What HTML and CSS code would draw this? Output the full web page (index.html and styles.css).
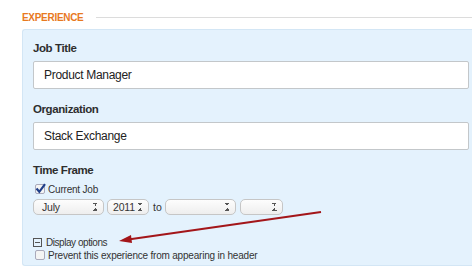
FILE: index.html
```html
<!DOCTYPE html>
<html lang="en">
<head>
    <meta charset="UTF-8">
    <title>Experience</title>
    <link rel="stylesheet" href="styles.css">
</head>
<body>
    <div class="section-head">
        <span class="section-title">EXPERIENCE</span>
        <span class="section-rule"></span>
    </div>

    <div class="panel">
        <label class="field-label">Job Title</label>
        <div class="text-input">Product Manager</div>

        <label class="field-label">Organization</label>
        <div class="text-input">Stack Exchange</div>

        <label class="field-label">Time Frame</label>
        <div class="check-row">
            <span class="checkbox checked">
                <svg width="11" height="11" viewBox="0 0 11 11"><path d="M1.5 5.5 L4.3 8.8 L10 1.2" fill="none" stroke="#1f3f8a" stroke-width="2.2"/></svg>
            </span>
            <span>Current Job</span>
        </div>
        <div class="date-row">
            <span class="select month">July</span>
            <span class="select year">2011</span>
            <span class="to">to</span>
            <span class="select month"></span>
            <span class="select year-empty"></span>
        </div>

        <div class="options-row">
            <span class="toggle-box"></span>
            <span>Display options</span>
        </div>
        <div class="check-row prevent">
            <span class="checkbox"></span>
            <span>Prevent this experience from appearing in header</span>
        </div>
    </div>

    <svg class="arrow" width="474" height="271" viewBox="0 0 474 271">
        <line x1="321" y1="212" x2="130" y2="239.3" stroke="#a3161a" stroke-width="2"/>
        <path d="M119 241 L131 235 L132 243 Z" fill="#a3161a"/>
    </svg>
</body>
</html>
```

FILE: styles.css
```css
body {
    margin: 0;
    padding: 10px 2px 0 22px;
    background: #fff;
    font-family: "Liberation Sans", Arial, sans-serif;
    color: #333;
    position: relative;
    height: 261px;
    overflow: hidden;
}

.section-head {
    display: flex;
    align-items: center;
    height: 15px;
}

.section-title {
    color: #e8791f;
    font-size: 10px;
    font-weight: bold;
    letter-spacing: -0.3px;
}

.section-rule {
    flex: 1;
    height: 1px;
    margin-left: 13px;
    background: #dcdcdc;
}

.panel {
    margin-top: 4px;
    background: #e4f2fd;
    border: 1px solid #d3e6f5;
    border-right: none;
    border-radius: 3px 0 0 3px;
    padding: 11px 4px 10px 10px;
    height: 214px;
}

.field-label {
    display: block;
    font-size: 11.5px;
    font-weight: bold;
    line-height: 14px;
    letter-spacing: -0.4px;
    color: #2e2e2e;
}

.text-input {
    box-sizing: border-box;
    width: 436px;
    height: 28px;
    margin: 6px 0 13px;
    padding: 0 10px;
    background: #fff;
    border: 1px solid #c3c7ca;
    border-radius: 2px;
    font-size: 12px;
    letter-spacing: -0.3px;
    line-height: 26px;
    color: #222;
}

.check-row {
    display: flex;
    align-items: center;
    gap: 3px;
    font-size: 10px;
    letter-spacing: -0.2px;
    color: #333;
    margin-top: 5px;
    margin-left: 2px;
    height: 14px;
}

.checkbox {
    box-sizing: border-box;
    width: 10px;
    height: 10px;
    border: 1px solid #aab;
    border-radius: 2px;
    background: #f4f4f4;
    position: relative;
}

.checkbox.checked svg {
    position: absolute;
    left: -1px;
    top: -2px;
}

.date-row {
    display: flex;
    align-items: center;
    gap: 3px;
    margin-top: 3px;
    font-size: 10.5px;
}

.select {
    box-sizing: border-box;
    position: relative;
    height: 16px;
    padding-left: 8px;
    background: linear-gradient(#fdfdfd, #eeeeee);
    border: 1px solid #c6c6c6;
    border-radius: 5px;
    font-size: 10.5px;
    letter-spacing: -0.2px;
    line-height: 14px;
    color: #333;
}

.select::after {
    content: "";
    position: absolute;
    right: 5px;
    top: 3px;
    width: 5px;
    height: 8px;
    background:
        linear-gradient(to top right, transparent 50%, #555 50%) 0 0 / 3px 3px no-repeat,
        linear-gradient(to top left, transparent 50%, #555 50%) 2px 0 / 3px 3px no-repeat,
        linear-gradient(to bottom right, transparent 50%, #555 50%) 0 5px / 3px 3px no-repeat,
        linear-gradient(to bottom left, transparent 50%, #555 50%) 2px 5px / 3px 3px no-repeat;
}

.month {
    width: 71px;
}

.year {
    width: 42px;
    padding-left: 5px;
}

.year-empty {
    width: 43px;
    margin-left: 1px;
}

.to {
    margin-left: 1px;
    color: #333;
}

.options-row {
    display: flex;
    align-items: center;
    gap: 4px;
    margin-top: 20px;
    font-size: 10px;
    letter-spacing: -0.45px;
    height: 14px;
}

.toggle-box {
    box-sizing: border-box;
    width: 9px;
    height: 9px;
    border: 1px solid #555;
    position: relative;
}

.toggle-box::after {
    content: "";
    position: absolute;
    left: 1px;
    right: 1px;
    top: 3px;
    height: 1px;
    background: #555;
}

.prevent {
    margin-top: -1px;
}

.arrow {
    position: absolute;
    left: 0;
    top: 0;
    pointer-events: none;
}
```
